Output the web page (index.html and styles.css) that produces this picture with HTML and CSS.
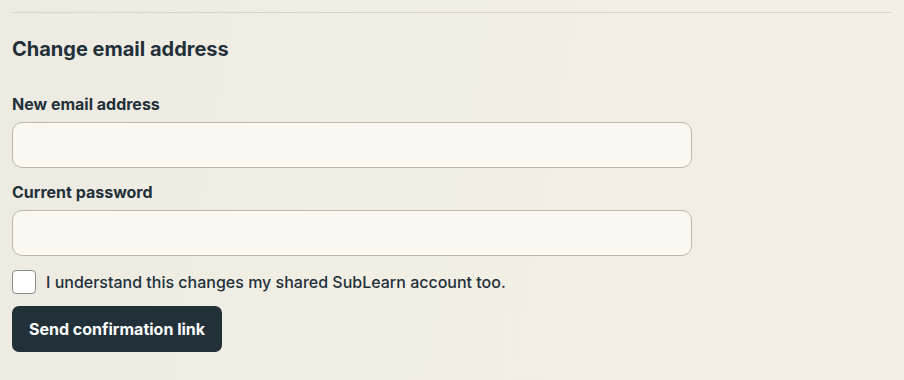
FILE: index.html
```html
<!DOCTYPE html>
<html>
<head>
<meta charset="utf-8">
<link rel="stylesheet" href="styles.css">
</head>
<body>
<section class="panel">
  <h2 class="title">Change email address</h2>
  <form class="form">
    <div class="field">
      <label class="label" for="email">New email address</label>
      <input class="input" id="email" type="email">
    </div>
    <div class="field">
      <label class="label" for="pw">Current password</label>
      <input class="input" id="pw" type="password">
    </div>
    <label class="check">
      <span class="box"></span>
      <span class="check-text">I understand this changes my shared SubLearn account too.</span>
    </label>
    <button class="btn" type="button">Send confirmation link</button>
  </form>
</section>
</body>
</html>
```
FILE: styles.css
```css
html, body {
  margin: 0;
  padding: 0;
}
body {
  width: 904px;
  height: 380px;
  overflow: hidden;
  background: linear-gradient(100deg, #edebe1 0%, #f1eee4 40%, #f3efe4 100%);
  font-family: Inter, "Noto Sans", sans-serif;
  color: #22303a;
  padding: 12px 12px 0;
  box-sizing: border-box;
}
.panel {
  border-top: 1px solid #d9d5c9;
}
.title {
  margin: 24px 0 0;
  font-size: 20px;
  line-height: 24px;
  font-weight: 670;
}
.form {
  display: flex;
  flex-direction: column;
  margin-top: 33px;
}
.field {
  display: flex;
  flex-direction: column;
  margin-bottom: 14px;
}
.label {
  font-size: 16px;
  line-height: 20px;
  font-weight: 700;
  margin-bottom: 8px;
}
.input {
  width: 680px;
  height: 46px;
  box-sizing: border-box;
  border: 1px solid #bcb7aa;
  border-radius: 10px;
  background: #faf8f0;
  margin: 0;
}
.check {
  display: flex;
  align-items: center;
  gap: 10px;
  height: 24px;
}
.box {
  width: 24px;
  height: 24px;
  box-sizing: border-box;
  border: 1px solid #8f8c86;
  border-radius: 4px;
  background: #ffffff;
}
.check-text {
  font-size: 16px;
  line-height: 20px;
  font-weight: 500;
}
.btn {
  align-self: flex-start;
  margin-top: 12px;
  height: 46px;
  padding: 0 17px;
  border: none;
  border-radius: 7px;
  background: #22303a;
  color: #ffffff;
  font-family: Inter, "Noto Sans", sans-serif;
  font-size: 16px;
  font-weight: 650;
}
```
